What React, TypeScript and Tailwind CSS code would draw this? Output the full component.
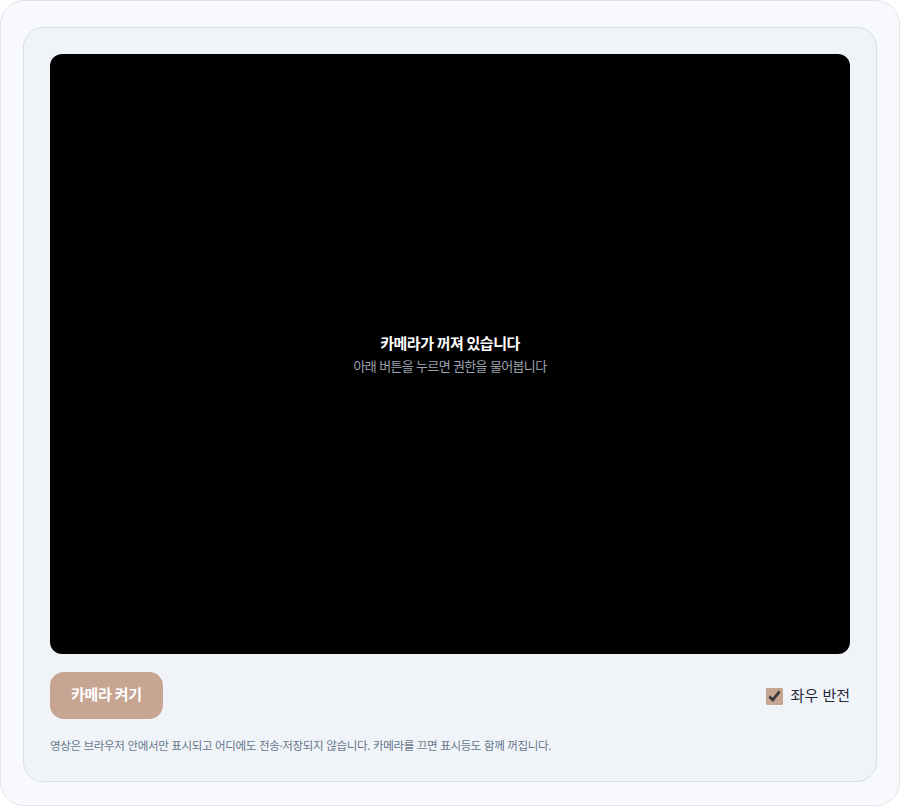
import React, { useState } from 'react';

export default function App() {
  const [mirror, setMirror] = useState(true);

  return (
    <div
      className="w-[900px] h-[806px] bg-[#f7f9fc] border border-[#dfe4ea] rounded-[24px] pt-[26px] pl-[22px] pr-[22px] pb-[23px]"
      style={{ fontFamily: 'Inter, "Noto Sans CJK KR", sans-serif' }}
    >
      <div className="h-full bg-[#f0f4f8] border border-[#d8dfe7] rounded-[20px] px-[26px] pt-[26px] flex flex-col">
        {/* Video area */}
        <div className="w-full h-[600px] bg-black rounded-[12px] flex flex-col items-center justify-center">
          <p className="text-white text-[15px] font-bold leading-[22px] tracking-[-0.03em]">카메라가 꺼져 있습니다</p>
          <p className="text-[#9ca3af] text-[13px] leading-[20px] mt-[1px] tracking-[-0.05em]">아래 버튼을 누르면 권한을 물어봅니다</p>
        </div>

        {/* Controls */}
        <div className="flex items-center justify-between mt-[18px]">
          <button className="h-[47px] px-[21px] rounded-[14px] bg-[#c8a592] text-white text-[15px] font-bold tracking-[-0.02em]">
            카메라 켜기
          </button>
          <label className="flex items-center gap-[8px] text-[15px] text-[#1f2937] pt-[1px]">
            <input
              type="checkbox"
              checked={mirror}
              onChange={(e) => setMirror(e.target.checked)}
              className="w-[17px] h-[17px] accent-[#c8a592]"
            />
            좌우 반전
          </label>
        </div>

        <p className="text-[11.5px] text-[#64748b] mt-[18px] leading-[18px] tracking-[-0.03em]">
          영상은 브라우저 안에서만 표시되고 어디에도 전송·저장되지 않습니다. 카메라를 끄면 표시등도 함께 꺼집니다.
        </p>
      </div>
    </div>
  );
}
